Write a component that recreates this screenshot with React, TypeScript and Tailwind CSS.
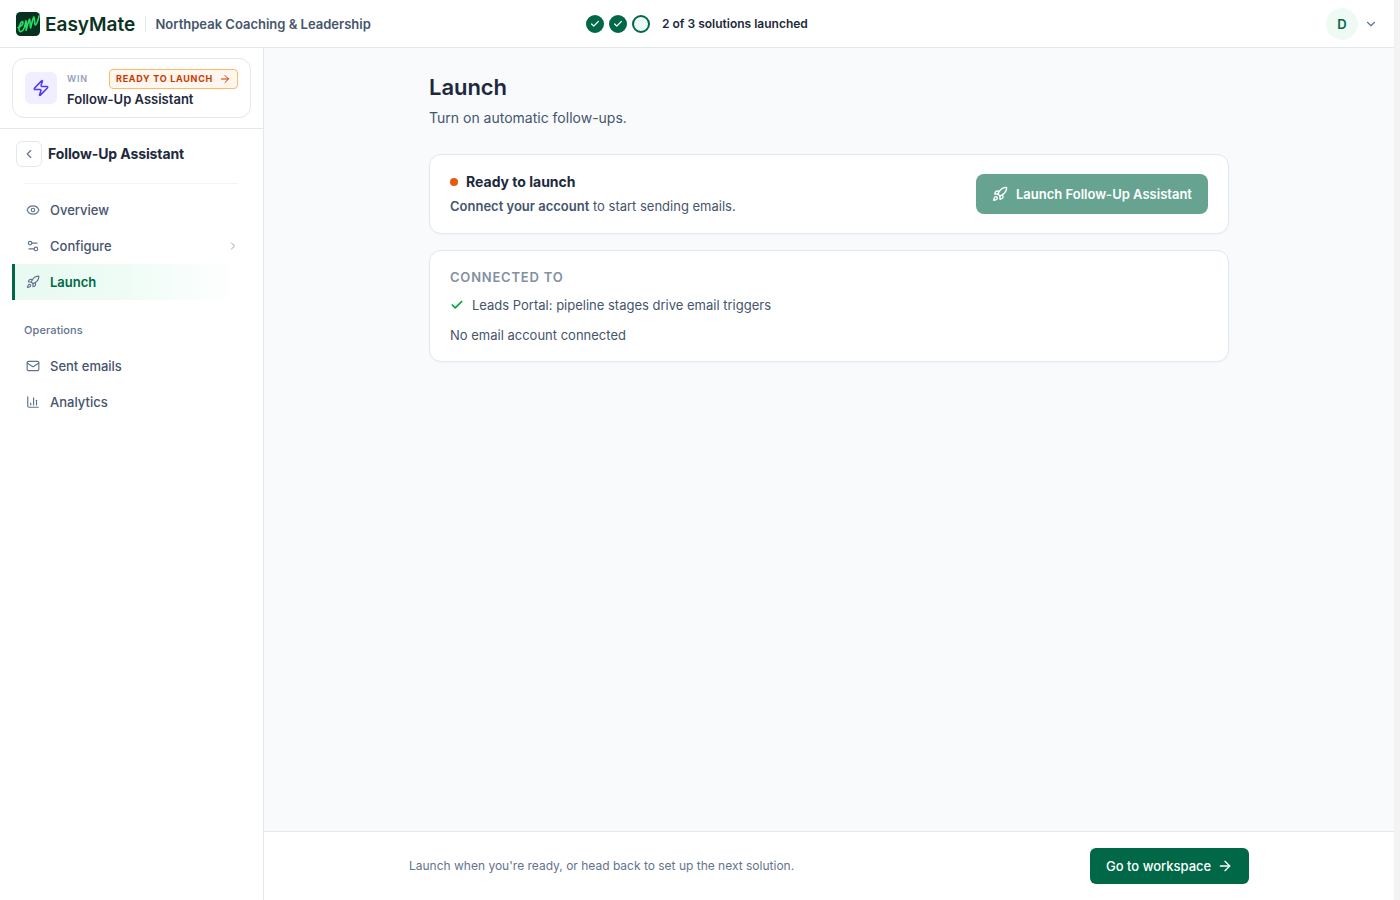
import React from "react";
import {
  ArrowRight,
  ChartColumn,
  Check,
  ChevronDown,
  ChevronLeft,
  ChevronRight,
  Eye,
  LucideIcon,
  Mail,
  Rocket,
  Settings2,
  Zap,
} from "lucide-react";
import clsx from "clsx";

type NavItem = {
  label: string;
  icon: LucideIcon;
  active?: boolean;
  expandable?: boolean;
};

const mainNav: NavItem[] = [
  { label: "Overview", icon: Eye },
  { label: "Configure", icon: Settings2, expandable: true },
  { label: "Launch", icon: Rocket, active: true },
];

const operationsNav: NavItem[] = [
  { label: "Sent emails", icon: Mail },
  { label: "Analytics", icon: ChartColumn },
];

const steps = [true, true, false];

const Logo = () => (
  <div className="flex items-center gap-[5px]">
    <svg width="24" height="24" viewBox="0 0 24 24" fill="none">
      <rect width="24" height="24" rx="4.5" fill="#06301f" />
      <path
        d="M2 15.5C5 15 7.6 12 6.9 9.8C5.9 8.2 3.2 12.5 3 17C3.2 21.3 6.6 20 8.4 15.5L10 8.8C10.8 11.5 9.8 15.5 10.2 18.3C11.2 15 12.2 9.3 13.6 7.2C14.6 9.5 13.8 13.5 14.6 16C15.7 12.5 16.4 7.3 17.9 5C19.2 6.8 18 11 19.2 13C20.8 12.5 22 8.5 23 4"
        stroke="#2bdc62"
        strokeWidth="1.6"
        strokeLinecap="round"
        strokeLinejoin="round"
      />
    </svg>
    <span className="w-[90px] whitespace-nowrap pt-0.5 text-[19px] font-semibold leading-6 text-[#0b3324]">
      EasyMate
    </span>
  </div>
);

const Header = () => (
  <header className="flex h-12 shrink-0 items-center justify-between border-b border-slate-200 bg-white pl-4 pr-4 shadow-[0_1px_2px_rgba(0,0,0,0.04)]">
    <div className="flex w-[570px] items-center">
      <Logo />
      <div className="ml-2.5 mr-[9.5px] h-4 w-px bg-slate-200" />
      <span className="pt-px text-[13px] font-semibold leading-5 text-slate-600">
        Northpeak Coaching &amp; Leadership
      </span>
    </div>
    <div className="flex flex-1 items-center">
      <div className="flex gap-[5px]">
        {steps.map((done, i) => (
          <span
            key={i}
            className={clsx(
              "flex size-[18px] items-center justify-center rounded-full border-2 border-[#006747]",
              done ? "bg-[#006747]" : "bg-[#ecf9f3]"
            )}
          >
            {done && <Check size={10} strokeWidth={3} className="text-white" />}
          </span>
        ))}
      </div>
      <span className="ml-3 text-xs font-semibold text-slate-800">
        2 of 3 solutions launched
      </span>
    </div>
    <div className="flex items-center gap-1.5">
      <span className="flex size-8 items-center justify-center rounded-full bg-[#effaf5] text-[13px] font-semibold leading-5 text-[#006747]">
        D
      </span>
      <ChevronDown size={14} className="text-slate-500" />
    </div>
  </header>
);

const NavLink = ({ item }: { item: NavItem }) => {
  const Icon = item.icon;
  return (
    <a
      className={clsx(
        "flex h-9 items-center border-l-[3px] pl-[11px] text-[13px] leading-5",
        item.active
          ? "border-[#006747] bg-linear-to-r from-[#e8faf2] via-[#effcf6] to-white font-semibold text-[#006747]"
          : "border-transparent font-medium text-slate-600"
      )}
    >
      <Icon size={14} strokeWidth={2} className="mr-2.5 text-slate-500" />
      <span>{item.label}</span>
      {item.expandable && (
        <ChevronRight size={12} className="ml-auto text-slate-400" />
      )}
    </a>
  );
};

const Sidebar = () => (
  <aside className="flex w-[264px] shrink-0 flex-col border-r border-slate-200 bg-white">
    <div className="border-b border-slate-200 px-3 py-2.5">
      <div className="flex h-[60px] w-[239px] items-center rounded-xl border border-slate-200 px-3">
        <div className="flex size-8 items-center justify-center rounded-md bg-[#f0eeff]">
          <Zap size={18} strokeWidth={2} className="text-indigo-600" />
        </div>
        <div className="ml-2.5 flex-1 pt-0.5">
          <div className="flex h-5 items-center justify-between">
            <span className="text-[9px] font-semibold leading-3 tracking-[0.75px] text-slate-400">
              WIN
            </span>
            <span className="flex h-5 w-[129px] items-center justify-between whitespace-nowrap rounded border border-orange-300 bg-orange-50 px-1.5 text-[9px] font-bold tracking-[0.72px] text-orange-700">
              READY TO LAUNCH
              <ArrowRight size={12} strokeWidth={2} />
            </span>
          </div>
          <div className="text-[13px] font-semibold leading-5 text-slate-800">
            Follow-Up Assistant
          </div>
        </div>
      </div>
    </div>

    <div className="flex items-center gap-1.5 px-4 pt-3">
      <button className="flex size-[26px] items-center justify-center rounded-md border border-slate-200">
        <ChevronLeft size={14} className="text-slate-500" />
      </button>
      <span className="text-sm font-bold tracking-[-0.1px] text-slate-800">
        Follow-Up Assistant
      </span>
    </div>
    <div className="ml-6 mr-[25px] mt-4 h-px bg-slate-100" />

    <nav className="mt-2 pl-3 pr-6">
      {mainNav.map((item) => (
        <NavLink key={item.label} item={item} />
      ))}
      <div className="mb-2.5 mt-[22px] pl-3 text-[11px] font-medium leading-4 tracking-[0.1px] text-slate-500">
        Operations
      </div>
      {operationsNav.map((item) => (
        <NavLink key={item.label} item={item} />
      ))}
    </nav>
  </aside>
);

const Card = ({
  children,
  className,
}: {
  children: React.ReactNode;
  className?: string;
}) => (
  <section
    className={clsx(
      "rounded-xl border border-slate-200 bg-white px-5 shadow-[0_1px_2px_rgba(0,0,0,0.03)]",
      className
    )}
  >
    {children}
  </section>
);

const LaunchPage = () => (
  <main className="flex-1">
    <div className="mx-auto w-[800px] pt-6">
      <h1 className="text-[22px] font-semibold leading-[30px] tracking-[-0.05px] text-slate-800">
        Launch
      </h1>
      <p className="mt-1.5 text-sm leading-5 text-slate-600">
        Turn on automatic follow-ups.
      </p>

      <Card className="mt-[26px] flex h-20 items-center justify-between">
        <div>
          <div className="flex items-center gap-2 text-sm font-bold leading-6 text-slate-800">
            <span className="size-2 rounded-full bg-[#ea580c]" />
            Ready to launch
          </div>
          <p className="text-[13px] leading-6 text-slate-600">
            <span className="font-semibold">Connect your account</span> to start
            sending emails.
          </p>
        </div>
        <button className="flex h-10 w-[232px] items-center gap-2 whitespace-nowrap rounded-lg bg-[#66a491] px-4 text-[13px] font-semibold leading-5 text-white">
          <Rocket size={16} strokeWidth={2} className="shrink-0" />
          Launch Follow-Up Assistant
        </button>
      </Card>

      <Card className="mt-4 h-28 pt-4">
        <h2 className="text-[13px] font-semibold leading-5 tracking-[0.78px] text-[#8290a5]">
          CONNECTED TO
        </h2>
        <div className="mt-2 flex items-center gap-2 text-[13px] leading-5 text-slate-600">
          <Check size={14} strokeWidth={3} className="text-green-600" />
          Leads Portal: pipeline stages drive email triggers
        </div>
        <p className="mt-2.5 text-[13px] leading-5 text-slate-600">
          No email account connected
        </p>
      </Card>
    </div>
  </main>
);

const Footer = () => (
  <footer className="flex h-[69px] shrink-0 items-center border-t border-slate-200 bg-white">
    <div className="mx-auto flex w-[840px] items-center justify-between">
      <p className="text-xs text-slate-500">
        Launch when you're ready, or head back to set up the next solution.
      </p>
      <button className="flex h-9 w-[159px] items-center justify-between whitespace-nowrap rounded-md bg-[#006747] px-4 text-[13px] font-medium leading-5 text-white">
        Go to workspace
        <ArrowRight size={16} strokeWidth={2} />
      </button>
    </div>
  </footer>
);

const App = () => (
  <div className="flex h-[900px] w-[1400px] overflow-hidden bg-[#f3f3f3] font-[Inter,sans-serif]">
    <div className="flex w-[1394px] flex-col">
      <Header />
      <div className="flex min-h-0 flex-1">
        <Sidebar />
        <div className="flex flex-1 flex-col bg-slate-50">
          <LaunchPage />
          <Footer />
        </div>
      </div>
    </div>
  </div>
);

export default App;
